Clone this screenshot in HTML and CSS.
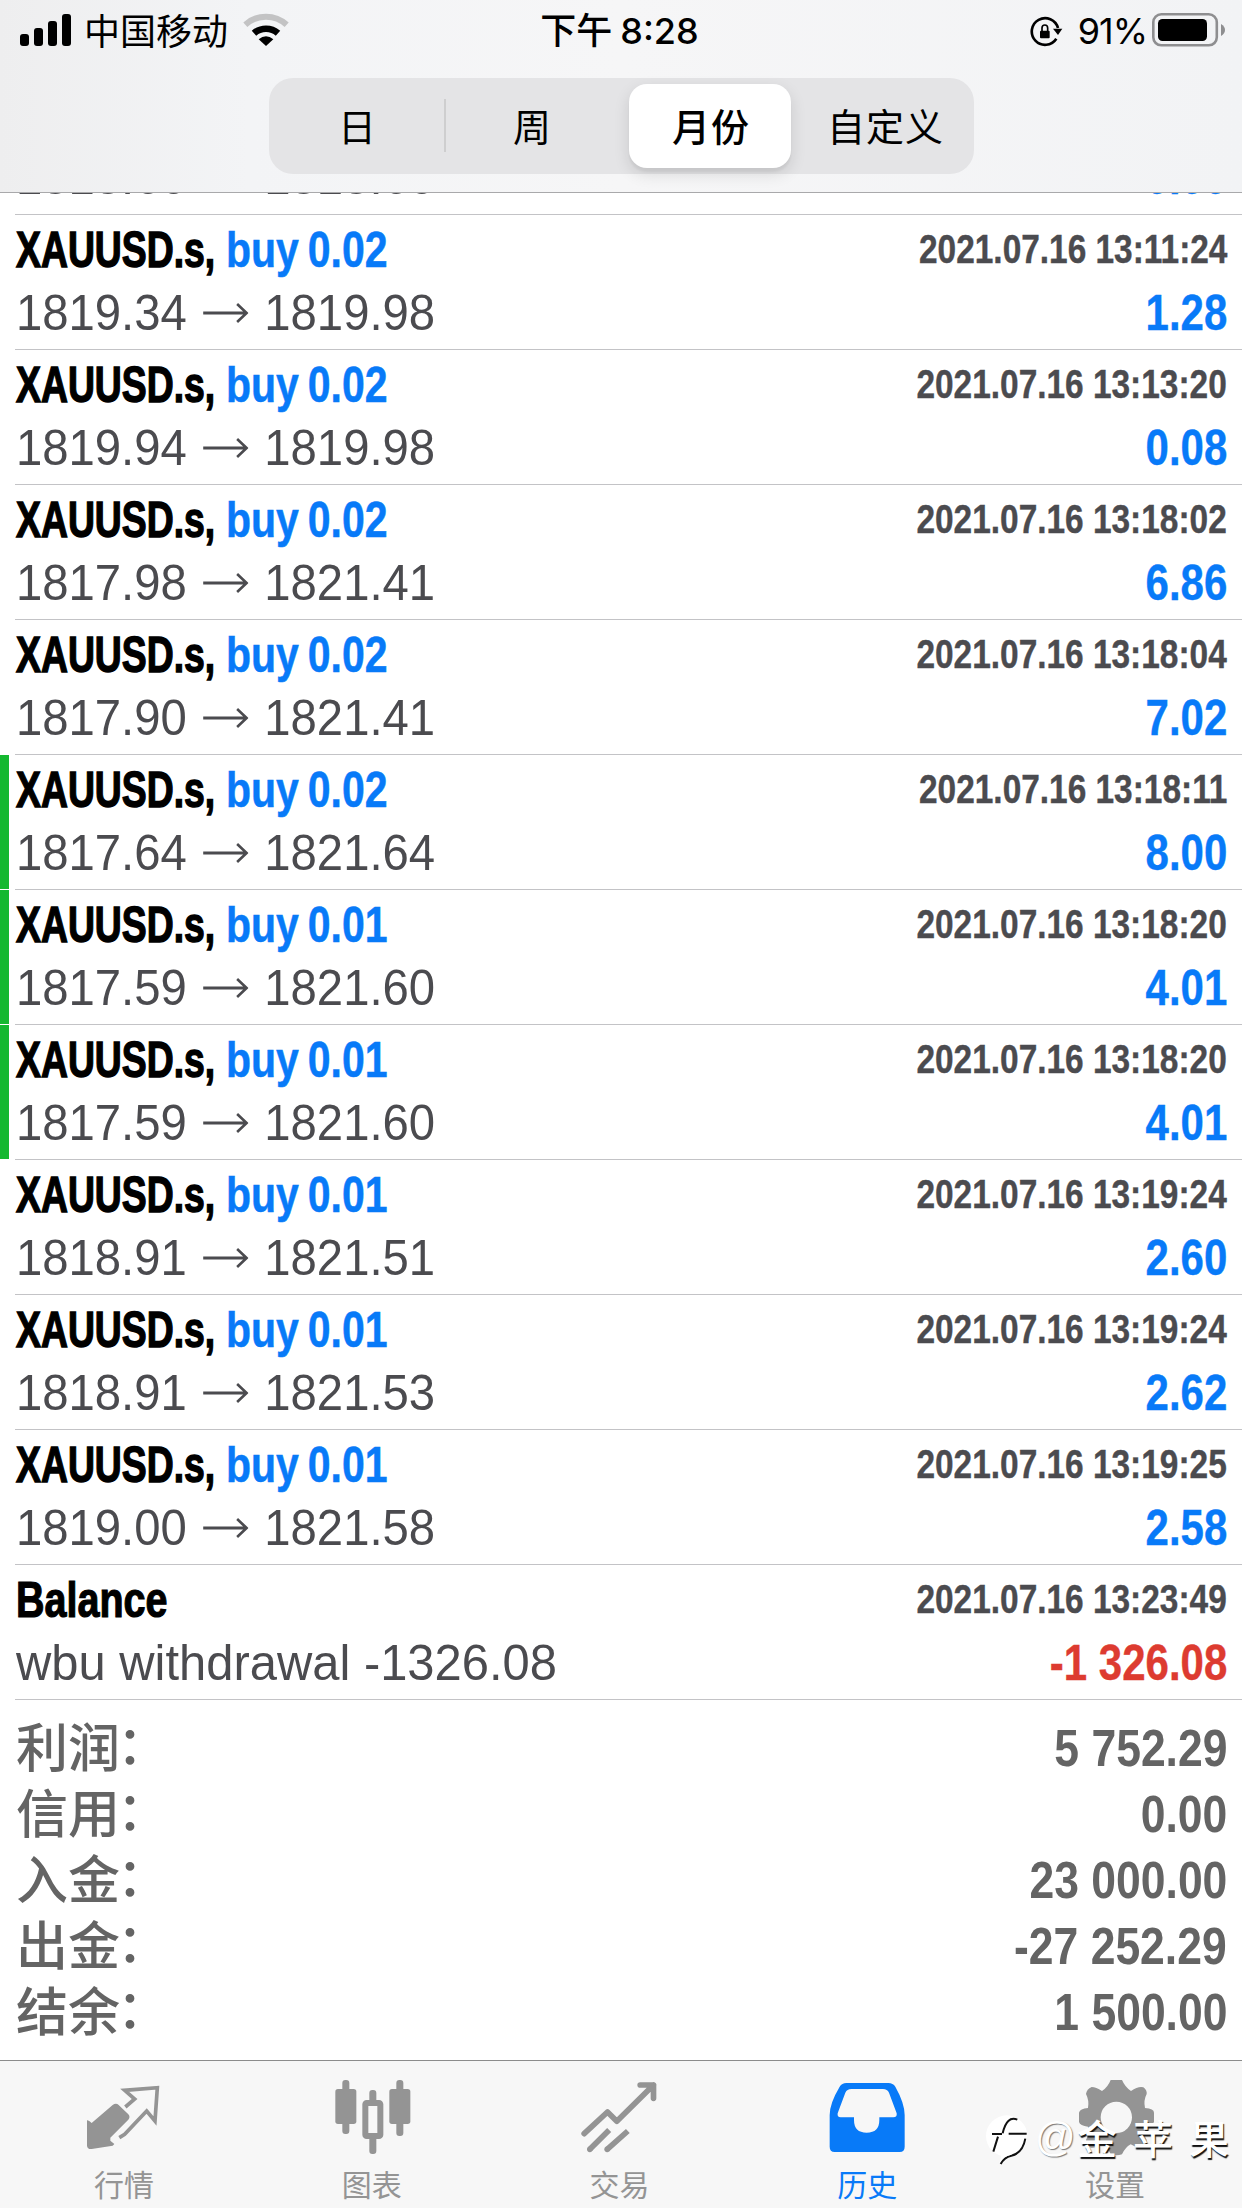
FILE: index.html
```html
<!DOCTYPE html>
<html lang="zh-CN">
<head>
<meta charset="utf-8">
<title>历史</title>
<link rel="stylesheet" href="styles.css">
</head>
<body>
<header class="header">
  <div class="status">
    <div class="status-left">
      <svg class="signal" width="52" height="33" viewBox="0 0 52 33"><rect x="0" y="20" width="9" height="12" rx="3"/><rect x="14" y="14" width="9" height="18" rx="3"/><rect x="28" y="7" width="9" height="25" rx="3"/><rect x="42" y="0" width="9" height="32" rx="3"/></svg>
      <span class="carrier">中国移动</span>
      <svg class="wifi" width="46" height="34" viewBox="0 0 138 102"><path d="M7 35A92 92 0 0 1 131 35" fill="none" stroke="#c3c3c4" stroke-width="18"/><path d="M33 61A54 54 0 0 1 105 61" fill="none" stroke="#000" stroke-width="20"/><path d="M47 79Q69 60 91 79L69 99Z"/></svg>
    </div>
    <div class="clock">下午<span class="digits">8:28</span></div>
    <div class="status-right">
      <svg class="lock" width="34" height="32" viewBox="0 0 102 96"><path d="M84 36A40 40 0 1 0 79 68" fill="none" stroke="#000" stroke-width="8"/><path d="M69 38H97L84 57Z"/><rect x="30" y="44" width="29" height="23" rx="3"/><path d="M36 46V36a8.500 9 0 0 1 17 0V46" fill="none" stroke="#000" stroke-width="5"/></svg>
      <span class="percent">91%</span>
      <svg class="battery" width="74" height="34" viewBox="0 0 74 34"><rect x="1.3" y="1.3" width="63.5" height="31" rx="8" fill="none" stroke="#8e8e90" stroke-width="2.6"/><rect x="6" y="6" width="49" height="22" rx="4.5"/><path d="M69 11q4 2.500 4 6t-4 6z" fill="#8e8e90"/></svg>
    </div>
  </div>
  <nav class="segments">
    <span class="segment">日</span>
    <span class="segment divided">周</span>
    <span class="segment selected">月份</span>
    <span class="segment">自定义</span>
  </nav>
</header>
<main class="history" id="history"></main>
<footer class="tabs">
  <div class="tab"><svg viewBox="258 117 228 228"><path d="M261 241Q266 240 275 249L338 195Q348 188 356 195L385 223Q392 231 385 239L331 293V302L343 312L338 317L275 327Q262 328 261 317Z"/><path d="M376 201L404 177L374 151L472 143L465 243L440 213L374 283L358 293" fill="none" stroke="#949494" stroke-width="11"/></svg>行情</div>
  <div class="tab"><svg viewBox="1001 117 228 228"><rect x="1026" y="120" width="21" height="162" rx="9"/><rect x="1005" y="147" width="63" height="105" rx="8"/><rect x="1188" y="120" width="21" height="168" rx="9"/><rect x="1167" y="147" width="63" height="105" rx="8"/><rect x="1107" y="150" width="21" height="45" rx="9"/><rect x="1107" y="285" width="21" height="57" rx="9"/><rect x="1095" y="189" width="45" height="99" rx="4" fill="#f7f7f7" stroke="#949494" stroke-width="18"/></svg>图表</div>
  <div class="tab"><svg viewBox="124.500 117 228 228"><path d="M134 281L204 216L232 244L342 135M302 135H342V175" fill="none" stroke="#949494" stroke-width="17" stroke-linecap="round" stroke-linejoin="round"/><path d="M151 328L209 270M203 328L265 273" fill="none" stroke="#949494" stroke-width="17"/><circle cx="151" cy="328" r="8.500"/><circle cx="203" cy="328" r="8.500"/></svg>交易</div>
  <div class="tab active"><svg viewBox="868 117 228 228"><path fill-rule="evenodd" d="M920 129H1046Q1060 129 1067 140Q1095 190 1095 225V320Q1095 336 1080 336H885Q870 336 870 320V225Q870 190 900 140Q907 129 920 129ZM935 147Q922 147 917 158L894 220Q892 232 903 232H943V240Q943 278 981 278Q1019 278 1019 240V232H1061Q1073 232 1071 220L1048 158Q1043 147 1030 147Z"/></svg>历史</div>
  <div class="tab"><svg viewBox="411 117 228 228"><path fill-rule="evenodd" d="M512 120H546Q555 141 573 153Q595 138 610 142Q622 151 620 162Q610 181 615 204Q642 206 642 218V246Q636 257 615 260Q610 282 620 300Q620 317 606 323Q590 325 572 313Q555 323 546 343Q530 349 512 343Q504 323 486 313Q467 325 452 323Q438 315 438 300Q448 282 444 260Q420 257 417 246V218Q420 206 444 204Q448 181 438 162Q440 147 455 141Q468 141 486 153Q504 141 512 120ZM529 185A47 47 0 1 0 529 279A47 47 0 1 0 529 185Z"/></svg>设置</div>
</footer>
<div class="watermark">
  <svg width="42" height="50" viewBox="138 235 126 150"><circle cx="200" cy="298" r="62" fill="#fff"/><path d="M232 249Q200 236 188 290M156 292H186M174 300L160 345" fill="none" stroke="#111" stroke-width="6"/><path d="M206 291H260M256 306Q248 350 214 357Q192 362 182 382" fill="none" stroke="#111" stroke-width="6"/><path d="M200 296L178 380Q190 358 214 354L240 296Z" fill="#fff"/></svg>
  <span class="at">@</span><span>金</span><span>苹</span><span>果</span>
</div>
<script src="history.js"></script>
</body>
</html>
```
FILE: styles.css
```css
* { box-sizing: border-box; }
body {
  margin: 0;
  width: 1242px;
  height: 2208px;
  display: flex;
  flex-direction: column;
  overflow: hidden;
  background: #fff;
  color: #000;
  font-family: "Liberation Sans", "Noto Sans CJK SC", sans-serif;
}
.header {
  height: 193px;
  flex: none;
  background: linear-gradient(90deg, #eeeeef, #f3f4f6 20%, #f6f6f7 50%, #f2f3f5);
  border-bottom: 1px solid #a9a9ab;
}
.status {
  height: 78px;
  padding: 0 16px 0 20px;
  display: grid;
  grid-template-columns: 1fr auto 1fr;
  font: 36px/62px "Inter", "Noto Sans CJK SC", sans-serif;
}
.status-left, .status-right { display: flex; align-items: flex-start; }
.status-right { justify-content: flex-end; }
.signal { margin-top: 14px; }
.carrier { margin-left: 12px; padding-top: 1px; line-height: 62px; }
.wifi { margin: 13px 0 0 15px; }
.clock { font-weight: 500; display: flex; gap: 8px; padding-right: 7px; }
.lock { margin: 16px 14px 0 0; }
.percent { letter-spacing: -1px; }
.battery { margin: 13px 0 0 5px; }
.segments {
  width: 705px;
  height: 96px;
  margin-left: 269px;
  padding: 6px 0;
  display: flex;
  border-radius: 24px;
  background: #e4e4e6;
}
.segment {
  flex: 1;
  text-align: center;
  font: 38px/82px "Noto Sans CJK SC", sans-serif;
  letter-spacing: 1px;
}
.divided {
  margin-left: -2px;
  background: linear-gradient(#cececf, #cececf) left 15px / 2px 53px no-repeat;
}
.selected {
  flex: 0 0 162px;
  margin: 0 6px 0 8px;
  padding-left: 2px;
  border-radius: 18px;
  background: #fff;
  font-weight: 500;
  box-shadow: 0 6px 16px rgba(0, 0, 0, .12), 0 4px 2px rgba(0, 0, 0, .04);
}
.history { flex: 1; min-height: 0; overflow: hidden; }
.deal {
  height: 135px;
  display: flex;
  padding-left: 9px;
}
.deal:first-child { margin-top: -113px; }
.deal:first-child .line:first-child { height: 66px; }
.deal.target { background: linear-gradient(#14b830, #14b830) 0 0 / 9px 134px no-repeat; }
.deal-body {
  flex: 1;
  margin-left: 6px;
  padding-right: 15px;
  border-bottom: 1px solid #c3c3c6;
}
.line { display: flex; height: 63px; padding-left: 1px; line-height: 63px; font-size: 50px; white-space: nowrap; }
.line:first-child { padding-top: 4px; height: 67px; }
.line > span { display: block; transform-origin: left center; }
.line > span:last-child { margin-left: auto; transform-origin: right center; }
.symbol { width: 210px; font-weight: bold; transform: scaleX(.747); -webkit-text-stroke: 1.4px; }
.balance { transform: scaleX(.79); font-weight: bold; -webkit-text-stroke: 1.2px; }
.order { color: #087af8; font-weight: bold; transform: scaleX(.82); word-spacing: -3px; -webkit-text-stroke: .5px; }
.date { color: #4b4b4f; font-size: 41px; line-height: 60px; font-weight: bold; transform: scaleX(.815); -webkit-text-stroke: .4px; }
.line .price { color: #4b4b4f; transform: scaleX(.945); display: flex; align-items: center; }
.line .comment { color: #4b4b4f; transform: scaleX(.978); }
.price svg { margin: 0 17px 2px 17px; width: 48px; height: 22px; }
.amount { color: #087af8; font-weight: bold; transform: scaleX(.84); -webkit-text-stroke: .4px; }
.amount.loss { color: #dd3b30; }
.totals { margin: 0; padding: 15px 15px 0 16px; color: #646464; }
.total { height: 66px; display: flex; justify-content: space-between; line-height: 66px; font-size: 52px; white-space: nowrap; }
.total dt { font-family: "Noto Sans CJK SC", sans-serif; font-weight: 500; line-height: 60px; }
.total dt span { display: inline-block; transform: translate(-3px, -3px); }
.total dd { margin: 0; font-weight: bold; transform: scaleX(.855); transform-origin: right center; }
.tabs {
  height: 148px;
  flex: none;
  padding-right: 3px;
  display: flex;
  background: #f7f7f7;
  border-top: 1px solid #8c8c8c;
}
.tab {
  flex: 1;
  padding-top: 18px;
  display: flex;
  flex-direction: column;
  align-items: center;
  color: #949494;
  font: 30px/44px "Noto Sans CJK SC", sans-serif;
}
.tab svg { width: 76px; height: 76px; margin-bottom: 6px; fill: currentColor; overflow: visible; flex: none; }
.tab.active { color: #087af8; }
.watermark {
  position: absolute;
  left: 986px;
  top: 2115px;
  display: flex;
  color: #fff;
  font: 500 40px/44px "Noto Sans CJK SC", sans-serif;
  text-shadow: 1px 2px 1px #111;
}
.watermark span { width: 56px; }
.watermark .at { width: 42px; margin-left: 7px; font-family: "Liberation Sans", sans-serif; text-shadow: 1px 1px 1px #777; }
```
FILE: history.js
```js
const deals = [
  ["0.02", "1818.60", "1818.60", "", "0.00"],
  ["0.02", "1819.34", "1819.98", "13:11:24", "1.28"],
  ["0.02", "1819.94", "1819.98", "13:13:20", "0.08"],
  ["0.02", "1817.98", "1821.41", "13:18:02", "6.86"],
  ["0.02", "1817.90", "1821.41", "13:18:04", "7.02"],
  ["0.02", "1817.64", "1821.64", "13:18:11", "8.00", true],
  ["0.01", "1817.59", "1821.60", "13:18:20", "4.01", true],
  ["0.01", "1817.59", "1821.60", "13:18:20", "4.01", true],
  ["0.01", "1818.91", "1821.51", "13:19:24", "2.60"],
  ["0.01", "1818.91", "1821.53", "13:19:24", "2.62"],
  ["0.01", "1819.00", "1821.58", "13:19:25", "2.58"],
];
const totals = [
  ["利润", "5 752.29"],
  ["信用", "0.00"],
  ["入金", "23 000.00"],
  ["出金", "-27 252.29"],
  ["结余", "1 500.00"],
];
const arrow = '<svg viewBox="0 0 48 22"><path d="M0 11H46M36 2L46 11L36 20" fill="none" stroke="currentColor" stroke-width="2.8"/></svg>';
const row = (cls, title, date, detail, amount, loss) => `
  <section class="deal ${cls}"><div class="deal-body">
    <div class="line">${title}<span class="date">${date}</span></div>
    <div class="line">${detail}<span class="amount ${loss}">${amount}</span></div>
  </div></section>`;

document.getElementById("history").innerHTML =
  deals.map(([lots, open, close, time, profit, target]) => row(
    target ? "target" : "",
    `<span class="symbol">XAUUSD.s,</span><span class="order">buy ${lots}</span>`,
    `2021.07.16 ${time}`,
    `<span class="price">${open}${arrow}${close}</span>`,
    profit, "")).join("") +
  row("", '<span class="balance">Balance</span>', "2021.07.16 13:23:49",
    '<span class="comment">wbu withdrawal -1326.08</span>', "-1 326.08", "loss") +
  `<dl class="totals">${totals.map(([name, value]) =>
    `<div class="total"><dt>${name}<span>：</span></dt><dd>${value}</dd></div>`).join("")}</dl>`;
```
